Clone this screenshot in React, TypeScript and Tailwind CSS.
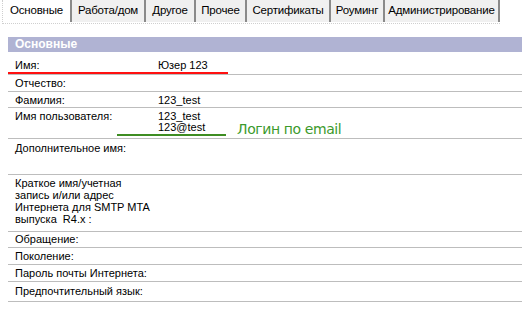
import React from "react";

const tabs = [
  { label: "Основные", w: "w-[69px]", active: true },
  { label: "Работа/дом", w: "w-[74px]" },
  { label: "Другое", w: "w-[50px]" },
  { label: "Прочее", w: "w-[51px]" },
  { label: "Сертификаты", w: "w-[84px]" },
  { label: "Роуминг", w: "w-[54px]" },
  { label: "Администрирование", w: "w-[115px]" },
];

const Row = ({
  label,
  value,
  h,
  pt = "pt-[2px]",
}: {
  label: React.ReactNode;
  value?: React.ReactNode;
  h: string;
  pt?: string;
}) => (
  <div className={`flex border-b border-[#bdbdbd] ${h} ${pt} leading-[12px]`}>
    <div className="w-[150px] shrink-0 pl-[7px]">{label}</div>
    <div className="flex-1">{value}</div>
  </div>
);

export default function App() {
  return (
    <div className="w-[522px] h-[324px] bg-white text-black font-['Liberation_Sans',Arial,sans-serif] text-[11px] overflow-hidden">
      {/* tabs */}
      <div className="ml-[2px] inline-flex h-[24px] border-b border-l border-dotted border-[#cfcfcf]">
        {tabs.map((t) => (
          <div
            key={t.label}
            className={`${t.w} h-[22px] flex items-center justify-center border-r-2 border-[#8a8a8a] text-[11.5px] tracking-[-0.2px] whitespace-nowrap ${
              t.active ? "bg-white" : "bg-[#f0f0f0]"
            }`}
          >
            {t.label}
          </div>
        ))}
      </div>

      <div className="ml-[8px] mt-[13px]">
        <div className="h-[15px] bg-[#b0b3d3] pl-[7px] text-white font-bold text-[12px] leading-[15px]">
          Основные
        </div>

        <div className="relative">
          <Row label="Имя:" value="Юзер 123" h="h-[23px]" pt="pt-[7px]" />
          <div className="absolute left-0 top-[20px] w-[220px] h-[2px] bg-[#ff1010]" />
        </div>
        <Row label="Отчество:" h="h-[17px]" />
        <Row label="Фамилия:" value="123_test" h="h-[16px]" />
        <div className="relative">
          <Row
            label="Имя пользователя:"
            value={
              <div className="leading-[11px] pt-[1px]">
                123_test
                <br />
                123@test
              </div>
            }
            h="h-[31px]"
          />
          <div className="absolute left-[109px] top-[26px] w-[109px] h-[2px] bg-[#3e8d22]" />
          <div className="absolute left-[229px] top-[13px] text-[14px] leading-[16px] text-[#3c9a2c] font-['DejaVu_Sans',sans-serif] tracking-[-0.4px]">
            Логин по email
          </div>
        </div>
        <Row label="Дополнительное имя:" h="h-[36px]" pt="pt-[3px]" />
        <Row
          label={
            <>
              Краткое имя/учетная
              <br />
              запись и/или адрес
              <br />
              Интернета для SMTP MTA
              <br />
              выпуска&nbsp; R4.x :
            </>
          }
          h="h-[57px]"
        />
        <Row label="Обращение:" h="h-[16px]" pt="pt-[1px]" />
        <Row label="Поколение:" h="h-[17px]" />
        <Row label="Пароль почты Интернета:" h="h-[17px]" />
        <Row label="Предпочтительный язык:" h="h-[20px]" pt="pt-[3px]" />
      </div>
    </div>
  );
}
